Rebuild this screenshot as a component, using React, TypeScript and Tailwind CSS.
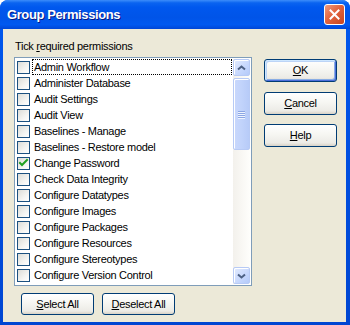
import React from 'react';

const permissions = [
    { name: 'Admin Workflow', checked: false },
    { name: 'Administer Database', checked: false },
    { name: 'Audit Settings', checked: false },
    { name: 'Audit View', checked: false },
    { name: 'Baselines - Manage', checked: false },
    { name: 'Baselines - Restore model', checked: false },
    { name: 'Change Password', checked: true },
    { name: 'Check Data Integrity', checked: false },
    { name: 'Configure Datatypes', checked: false },
    { name: 'Configure Images', checked: false },
    { name: 'Configure Packages', checked: false },
    { name: 'Configure Resources', checked: false },
    { name: 'Configure Stereotypes', checked: false },
    { name: 'Configure Version Control', checked: false },
];

const XpButton = ({ hotkey, rest, isDefault = false, className = '' }: { hotkey: string; rest: string; isDefault?: boolean; className?: string }) => (
    <div
        className={`h-[22px] w-[73px] flex items-center justify-center rounded-[3px] border border-[#003C74] bg-[linear-gradient(180deg,#FFFFFF_0%,#F6F6F2_45%,#ECEBE6_85%,#D8D2C6_100%)] text-[11px] text-black ${isDefault ? 'shadow-[inset_1px_1px_#CEE7FF,inset_-1px_-1px_#4C6EDB,inset_2px_2px_#BCD4F6,inset_-2px_-2px_#89ADE4]' : ''} ${className}`}
    >
        <span><u className="underline-offset-[1px]">{hotkey}</u>{rest}</span>
    </div>
);

const CheckBox = ({ checked }: { checked: boolean }) => (
    <div className="w-[13px] h-[13px] shrink-0 border border-[#1C5180] bg-[linear-gradient(135deg,#DCDCD7_0%,#F4F4F1_60%,#FFFFFF_100%)] flex items-center justify-center">
        {checked && (
            <svg width="11" height="11" viewBox="0 0 11 11">
                <path d="M2 5 L4 7 L9 2" fill="none" stroke="#21A121" strokeWidth="2" strokeLinecap="square" />
            </svg>
        )}
    </div>
);

const ScrollArrow = ({ down = false }: { down?: boolean }) => (
    <div className="h-[17px] w-[17px] rounded-[2px] border border-[#B7CAF5] bg-[linear-gradient(135deg,#E2EBFE_0%,#C6D7FD_60%,#B4CAF9_100%)] shadow-[inset_1px_1px_#FFFFFF] flex items-center justify-center">
        <svg width="9" height="6" viewBox="0 0 9 6">
            <path d={down ? 'M1 1.5 L4.5 4.5 L8 1.5' : 'M1 4.5 L4.5 1.5 L8 4.5'} fill="none" stroke="#4D6185" strokeWidth="2" />
        </svg>
    </div>
);

export default function App() {
    return (
        <div className="w-[350px] h-[325px] bg-white font-['Liberation_Sans',Arial,sans-serif]">
            <div className="w-[350px] h-[325px] flex flex-col rounded-t-[8px] bg-[linear-gradient(180deg,#0058EE_0%,#0052E6_30%,#0046D2_100%)] overflow-hidden">
                {/* title bar */}
                <div className="h-[29px] shrink-0 flex items-center justify-between pl-[7px] pr-[5px] bg-[linear-gradient(180deg,#3C8DFA_0%,#0A64F0_10%,#0058EE_25%,#0054E8_60%,#0059F0_85%,#0046D6_100%)]">
                    <span className="text-[13px] font-bold text-white [text-shadow:1px_1px_#0A1883] tracking-[-0.4px]">Group Permissions</span>
                    <div className="w-[21px] h-[21px] rounded-[3px] border border-white bg-[linear-gradient(135deg,#F09B7E_0%,#E2643F_45%,#C8451E_100%)] flex items-center justify-center">
                        <svg width="11" height="11" viewBox="0 0 11 11">
                            <path d="M1.5 1.5 L9.5 9.5 M9.5 1.5 L1.5 9.5" stroke="white" strokeWidth="2" strokeLinecap="square" />
                        </svg>
                    </div>
                </div>

                {/* client area */}
                <div className="flex-1 ml-[3px] mr-[4px] mb-[3px] bg-[#ECE9D8] flex text-[11px] text-black tracking-[-0.3px]">
                    <div className="flex flex-col ml-[11px]">
                        <div className="mt-[11px] h-[13px] leading-[13px] ml-[1px]">
                            Tick <u className="underline-offset-[1px]">r</u>equired permissions
                        </div>
                        <div className="mt-[4px] w-[238px] h-[229px] border border-[#7F9DB9] bg-white p-[1px] flex">
                            <div className="flex-1 flex flex-col">
                                {permissions.map((p, i) => (
                                    <div key={p.name} className="h-[16px] flex items-center">
                                        <div className="ml-[1px]">
                                            <CheckBox checked={p.checked} />
                                        </div>
                                        <div className={`ml-[2px] flex-1 h-[16px] leading-[14px] pl-[1px] border border-dotted ${i === 0 ? 'border-black' : 'border-transparent'}`}>
                                            {p.name}
                                        </div>
                                    </div>
                                ))}
                            </div>
                            <div className="w-[17px] ml-[1px] flex flex-col bg-[linear-gradient(90deg,#F3F1EC_0%,#FEFEFB_100%)]">
                                <ScrollArrow />
                                <div className="flex-1 pt-[2px]">
                                    <div className="h-[72px] w-[17px] rounded-[2px] border border-[#B7CAF5] bg-[linear-gradient(90deg,#C9D8FC_0%,#C1D3FB_50%,#B7CBF8_100%)] shadow-[inset_1px_1px_#FFFFFF] flex flex-col items-center justify-center gap-[1px]">
                                        {[0, 1, 2, 3].map(k => (
                                            <div key={k} className="w-[7px] h-[1px] bg-[#8CA6E4] shadow-[0_1px_#EEF4FE]" />
                                        ))}
                                    </div>
                                </div>
                                <ScrollArrow down />
                            </div>
                        </div>
                        <div className="flex mt-[7px] ml-[7px] gap-[8px]">
                            <XpButton hotkey="S" rest="elect All" />
                            <XpButton hotkey="D" rest="eselect All" />
                        </div>
                    </div>
                    <div className="flex flex-col ml-[12px] mt-[30px]">
                        <XpButton hotkey="O" rest="K" isDefault className="h-[23px]" />
                        <XpButton hotkey="C" rest="ancel" className="h-[23px] mt-[10px]" />
                        <XpButton hotkey="H" rest="elp" className="h-[23px] mt-[9px]" />
                    </div>
                </div>
            </div>
        </div>
    );
}
